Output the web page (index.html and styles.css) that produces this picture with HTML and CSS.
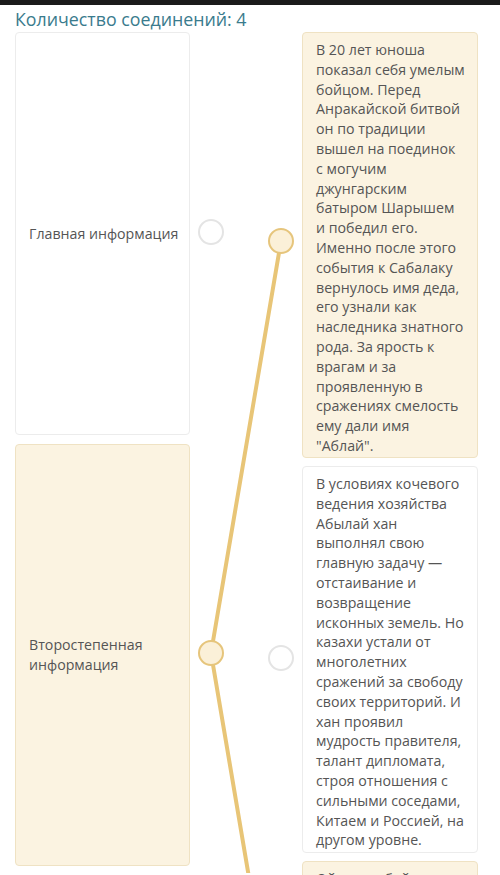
FILE: index.html
```html
<!DOCTYPE html>
<html lang="ru">
<head>
<meta charset="utf-8">
<link rel="stylesheet" href="styles.css">
</head>
<body>
<div class="topbar"></div>
<h1 class="title">Количество соединений: 4</h1>
<div class="board">
  <div class="col col-left">
    <div class="card card-white l1"><span class="label">Главная информация</span></div>
    <div class="card card-beige l2"><span class="label">Второстепенная<br>информация</span></div>
    <div class="card card-white l3"></div>
  </div>
  <div class="col col-mid"></div>
  <div class="col col-right">
    <div class="card card-beige r1"><p>В 20 лет юноша<br>показал себя умелым<br>бойцом. Перед<br>Анракайской битвой<br>он по традиции<br>вышел на поединок<br>с могучим<br>джунгарским<br>батыром Шарышем<br>и победил его.<br>Именно после этого<br>события к Сабалаку<br>вернулось имя деда,<br>его узнали как<br>наследника знатного<br>рода. За ярость к<br>врагам и за<br>проявленную в<br>сражениях смелость<br>ему дали имя<br>"Аблай".</p></div>
    <div class="card card-white r2"><p>В условиях кочевого<br>ведения хозяйства<br>Абылай хан<br>выполнял свою<br>главную задачу —<br>отстаивание и<br>возвращение<br>исконных земель. Но<br>казахи устали от<br>многолетних<br>сражений за свободу<br>своих территорий. И<br>хан проявил<br>мудрость правителя,<br>талант дипломата,<br>строя отношения с<br>сильными соседами,<br>Китаем и Россией, на<br>другом уровне.</p></div>
    <div class="card card-beige r3"><p>Ойтсык и бойцом</p></div>
  </div>
  <svg class="links" width="500" height="875" viewBox="0 0 500 875">
    <line x1="281" y1="243" x2="211" y2="655" class="link"/>
    <line x1="211" y1="655" x2="255" y2="915" class="link"/>
    <circle cx="211" cy="234" r="12" class="dot-empty"/>
    <circle cx="281" cy="243" r="12" class="dot-on"/>
    <circle cx="211" cy="655" r="12" class="dot-on"/>
    <circle cx="281" cy="660" r="12" class="dot-empty"/>
  </svg>
</div>
</body>
</html>
```
FILE: styles.css
```css
html, body {
  margin: 0;
  padding: 0;
  background: #ffffff;
  height: 875px;
  overflow: hidden;
}
body {
  font-family: "Open Sans", "Noto Sans", sans-serif;
  color: #555555;
}
.topbar {
  height: 5px;
  background: #1b1b1b;
}
.title {
  margin: 3px 0 0 15px;
  font-size: 17.8px;
  line-height: 22px;
  font-weight: 400;
  color: #3a7b8d;
}
.board {
  position: relative;
  display: grid;
  grid-template-columns: 175px 112px 176px;
  padding: 2px 0 0 15px;
}
.col {
  display: flex;
  flex-direction: column;
  gap: 8px;
}
.col-left { gap: 9px; }
.card {
  box-sizing: border-box;
  border-radius: 4px;
  font-size: 14.2px;
  line-height: 19.8px;
}
.card p { margin: 0; white-space: nowrap; }
.label { white-space: nowrap; }
.card-white {
  background: #ffffff;
  border: 1px solid #ececec;
}
.card-beige {
  background: #fbf3e1;
  border: 1px solid #efe2c3;
}
.col-left .card {
  display: flex;
  align-items: center;
  padding: 0 13px;
}
.l1 { height: 403px; }
.l2 { height: 422px; }
.l3 { height: 60px; }
.col-right .card { padding: 7px 13px 0; }
.r1 { height: 426px; }
.r2 { height: 387px; padding-top: 6px; }
.r3 { height: 60px; padding-top: 9px; }
.links {
  position: absolute;
  left: 0;
  top: -32px;
  pointer-events: none;
}
.link {
  stroke: #e8c577;
  stroke-width: 4;
  stroke-linecap: round;
}
.dot-empty {
  fill: #ffffff;
  stroke: #e4e4e4;
  stroke-width: 2;
}
.dot-on {
  fill: #fbf0d8;
  stroke: #e6c57c;
  stroke-width: 2;
}
```
